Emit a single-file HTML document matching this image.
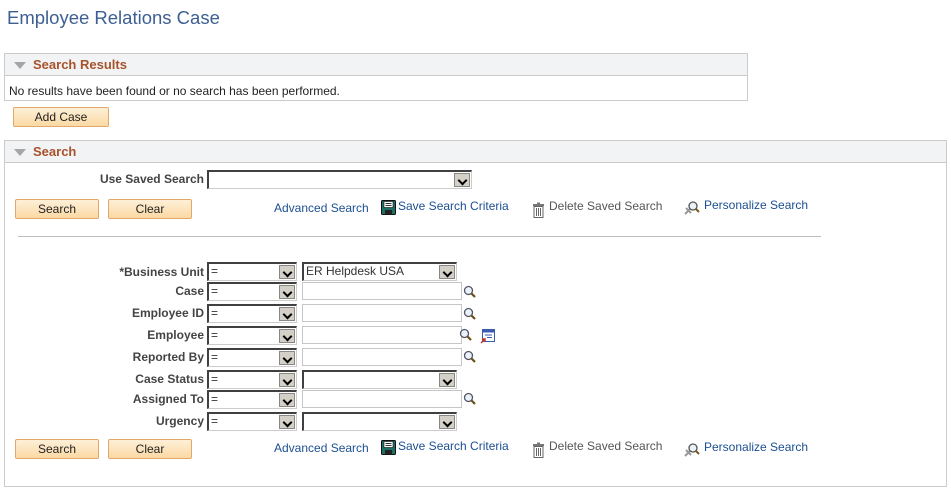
<!DOCTYPE html>
<html><head><style>
*{margin:0;padding:0;box-sizing:border-box}
body{width:951px;height:491px;background:#fff;font-family:"Liberation Sans",Arial,sans-serif;font-size:12px;color:#333;position:relative;overflow:hidden}
.a{position:absolute;white-space:nowrap}
.title{left:7px;top:7px;font-size:18.5px;color:#3d5f93}
.box{border:1px solid #cbcbcb}
.hdr{background:#f1f3f5;border-bottom:1px solid #cbcbcb;height:22px;position:relative}
.hdr span{position:absolute;left:28px;top:3px;font-weight:bold;font-size:13px;color:#a8532b}
.hdr i{position:absolute;left:9px;top:8px;width:0;height:0;border-left:6px solid transparent;border-right:6px solid transparent;border-top:7px solid #a5a5a5}
.btn{position:absolute;height:20px;background:linear-gradient(#fdf0d8,#fbd9a4);border:1px solid #e0a96a;border-radius:2px;text-align:center;line-height:18px;font-size:12px;color:#222}
.lbl{position:absolute;font-weight:bold;color:#444;text-align:right;width:200px;font-size:12px}
.sel{position:absolute;height:19px;background:#fff;border:1px solid #ccc;border-top:2px solid #404040;border-left:2px solid #404040;font-size:12px;padding-left:2px;line-height:15px;color:#333}
.sel b{position:absolute;right:1px;top:1px;width:16px;height:14px;background:#d4d0c8;border:1px solid #888}
.sel b:after{content:"";position:absolute;left:4px;top:3px;width:5px;height:5px;border-right:2px solid #000;border-bottom:2px solid #000;transform:rotate(45deg)}
.inp{position:absolute;height:18px;width:160px;border:1px solid #c6c6c6;background:#fff}
.lnk{position:absolute;color:#1c4f92;font-size:12px}
.gl{position:absolute}
</style></head><body>
<div class="a title">Employee Relations Case</div>

<div class="a box" style="left:4px;top:53px;width:744px;height:48px">
<div class="hdr"><i></i><span>Search Results</span></div>
<div style="position:absolute;left:4px;top:30px;font-size:12px;color:#222">No results have been found or no search has been performed.</div>
</div>
<div class="btn" style="left:13px;top:107px;width:96px">Add Case</div>

<div class="a box" style="left:4px;top:140px;width:943px;height:347px">
<div class="hdr"><i></i><span>Search</span></div>
</div>

<div class="lbl" style="left:4px;top:172px">Use Saved Search</div>
<div class="sel" style="left:207px;top:170px;width:265px"><b></b></div>

<div class="btn" style="left:15px;top:199px;width:84px">Search</div>
<div class="btn" style="left:108px;top:199px;width:84px">Clear</div>
<div class="lnk" style="left:274px;top:201px">Advanced Search</div>
<svg class="gl" style="left:381px;top:200px" width="15" height="15" viewBox="0 0 15 15"><rect x="0.5" y="0.5" width="14" height="14" rx="1" fill="#1f6e6a" stroke="#111"/><rect x="3" y="1.5" width="9" height="6" fill="#fff" stroke="#111" stroke-width=".6"/><line x1="4.5" y1="3.5" x2="10.5" y2="3.5" stroke="#333"/><line x1="4.5" y1="5.5" x2="10.5" y2="5.5" stroke="#333"/><rect x="4" y="10" width="7" height="4.5" fill="#222"/></svg>
<div class="lnk" style="left:398px;top:199px">Save Search Criteria</div>
<svg class="gl" style="left:532px;top:202px" width="13" height="16" viewBox="0 0 13 16"><rect x="1" y="2" width="11" height="2" fill="#777"/><rect x="5" y="0.5" width="3" height="2" fill="#777"/><rect x="2" y="4.5" width="9" height="11" fill="#fff" stroke="#666"/><line x1="4.5" y1="6" x2="4.5" y2="14" stroke="#666"/><line x1="6.5" y1="6" x2="6.5" y2="14" stroke="#666"/><line x1="8.5" y1="6" x2="8.5" y2="14" stroke="#666"/></svg>
<div class="lnk" style="left:549px;top:199px;color:#555">Delete Saved Search</div>
<svg class="gl" style="left:683px;top:200px" width="18" height="16" viewBox="0 0 18 16"><path d="M2 14 L7 9 M3 8 L8 13" stroke="#999" stroke-width="2"/><circle cx="10" cy="6" r="4" fill="#eaf2f8" stroke="#555" stroke-width="1.3"/><line x1="13" y1="9" x2="16" y2="12" stroke="#7a5a1a" stroke-width="2"/></svg>
<div class="lnk" style="left:704px;top:198px">Personalize Search</div>

<div class="a" style="left:18px;top:236px;width:803px;height:1px;background:#bdbdbd"></div>

<div class="lbl" style="left:4px;top:265px">*Business Unit</div>
<div class="sel" style="left:207px;top:262px;width:90px">=<b></b></div>
<div class="sel" style="left:302px;top:262px;width:155px">ER Helpdesk USA<b></b></div>

<div class="lbl" style="left:4px;top:284px">Case</div>
<div class="sel" style="left:207px;top:282px;width:90px">=<b></b></div>
<div class="inp" style="left:302px;top:282px"></div>

<div class="lbl" style="left:4px;top:306px">Employee ID</div>
<div class="sel" style="left:207px;top:304px;width:90px">=<b></b></div>
<div class="inp" style="left:302px;top:304px"></div>

<div class="lbl" style="left:4px;top:328px">Employee</div>
<div class="sel" style="left:207px;top:326px;width:90px">=<b></b></div>
<div class="inp" style="left:302px;top:326px"></div>

<div class="lbl" style="left:4px;top:350px">Reported By</div>
<div class="sel" style="left:207px;top:348px;width:90px">=<b></b></div>
<div class="inp" style="left:302px;top:348px"></div>

<div class="lbl" style="left:4px;top:372px">Case Status</div>
<div class="sel" style="left:207px;top:370px;width:90px">=<b></b></div>
<div class="sel" style="left:302px;top:370px;width:155px"><b></b></div>

<div class="lbl" style="left:4px;top:392px">Assigned To</div>
<div class="sel" style="left:207px;top:390px;width:90px">=<b></b></div>
<div class="inp" style="left:302px;top:390px"></div>

<div class="lbl" style="left:4px;top:414px">Urgency</div>
<div class="sel" style="left:207px;top:412px;width:90px">=<b></b></div>
<div class="sel" style="left:302px;top:412px;width:155px"><b></b></div>

<svg width="0" height="0" style="position:absolute"><defs><g id="mg"><circle cx="5.5" cy="5.5" r="4" fill="#eaf2fa" stroke="#556" stroke-width="1.3"/><line x1="8.5" y1="8.5" x2="12" y2="12" stroke="#6b5014" stroke-width="2.2"/></g></defs></svg>
<svg class="gl" style="left:463px;top:285px" width="14" height="14"><use href="#mg"/></svg>
<svg class="gl" style="left:463px;top:307px" width="14" height="14"><use href="#mg"/></svg>
<svg class="gl" style="left:459px;top:328px" width="14" height="14"><use href="#mg"/></svg>
<svg class="gl" style="left:480px;top:328px" width="16" height="16" viewBox="0 0 16 16"><rect x="2.5" y="1.5" width="12" height="12" fill="#fff" stroke="#3a5db0"/><rect x="2.5" y="1.5" width="12" height="3" fill="#3a5db0"/><line x1="5" y1="7" x2="12" y2="7" stroke="#3a5db0"/><line x1="7" y1="9.5" x2="12" y2="9.5" stroke="#3a5db0"/><path d="M1 15 L5 11 M2 11 L5 11 L5 14" stroke="#c0392b" stroke-width="1.5" fill="none"/></svg>
<svg class="gl" style="left:463px;top:350px" width="14" height="14"><use href="#mg"/></svg>
<svg class="gl" style="left:463px;top:392px" width="14" height="14"><use href="#mg"/></svg>

<div class="btn" style="left:15px;top:439px;width:84px">Search</div>
<div class="btn" style="left:108px;top:439px;width:84px">Clear</div>
<div class="lnk" style="left:274px;top:441px">Advanced Search</div>
<svg class="gl" style="left:381px;top:440px" width="15" height="15" viewBox="0 0 15 15"><rect x="0.5" y="0.5" width="14" height="14" rx="1" fill="#1f6e6a" stroke="#111"/><rect x="3" y="1.5" width="9" height="6" fill="#fff" stroke="#111" stroke-width=".6"/><line x1="4.5" y1="3.5" x2="10.5" y2="3.5" stroke="#333"/><line x1="4.5" y1="5.5" x2="10.5" y2="5.5" stroke="#333"/><rect x="4" y="10" width="7" height="4.5" fill="#222"/></svg>
<div class="lnk" style="left:398px;top:439px">Save Search Criteria</div>
<svg class="gl" style="left:532px;top:442px" width="13" height="16" viewBox="0 0 13 16"><rect x="1" y="2" width="11" height="2" fill="#777"/><rect x="5" y="0.5" width="3" height="2" fill="#777"/><rect x="2" y="4.5" width="9" height="11" fill="#fff" stroke="#666"/><line x1="4.5" y1="6" x2="4.5" y2="14" stroke="#666"/><line x1="6.5" y1="6" x2="6.5" y2="14" stroke="#666"/><line x1="8.5" y1="6" x2="8.5" y2="14" stroke="#666"/></svg>
<div class="lnk" style="left:549px;top:439px;color:#555">Delete Saved Search</div>
<svg class="gl" style="left:683px;top:442px" width="18" height="16" viewBox="0 0 18 16"><path d="M2 14 L7 9 M3 8 L8 13" stroke="#999" stroke-width="2"/><circle cx="10" cy="6" r="4" fill="#eaf2f8" stroke="#555" stroke-width="1.3"/><line x1="13" y1="9" x2="16" y2="12" stroke="#7a5a1a" stroke-width="2"/></svg>
<div class="lnk" style="left:704px;top:440px">Personalize Search</div>
</body></html>
